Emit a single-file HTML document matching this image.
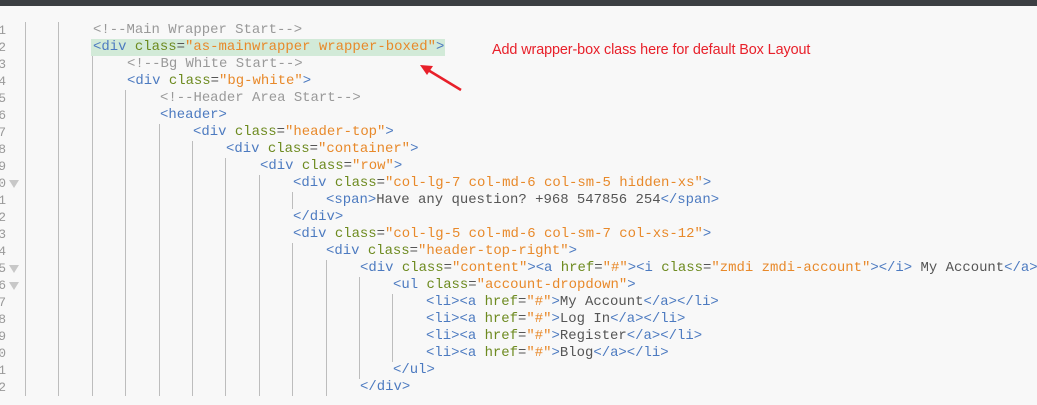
<!DOCTYPE html>
<html><head><meta charset="utf-8"><style>
body{margin:0;width:1037px;height:405px;overflow:hidden;background:#f8f8f8;position:relative;font-family:"Liberation Mono",monospace;}
.top{position:absolute;left:0;top:0;width:1037px;height:6px;background:#3c3f43;}
.l{position:absolute;left:0;height:17px;line-height:17px;font-size:13.95px;white-space:pre;color:#555;}
.n{position:absolute;left:-4px;width:10px;text-align:right;color:#999;font-size:13px;}
.g{position:absolute;top:0;width:1px;height:17px;background:#bdbdbd;}
.c{color:#999}.t{color:#4c7ac0}.a{color:#6d8a1f}.s{color:#e8892a}.x{color:#555}
.f{position:absolute;left:9px;top:5px;width:0;height:0;border-left:5px solid transparent;border-right:5px solid transparent;border-top:8px solid #c8c8c8;}
</style></head><body>
<div class="top"></div>
<div style="position:absolute;left:91px;top:39px;width:354px;height:17px;background:#d2ead8"></div>
<div id="c"></div>
<div style="position:absolute;left:492px;top:42px;font-family:'Liberation Sans',sans-serif;font-size:14.4px;letter-spacing:-0.1px;color:#e8202a;white-space:nowrap">Add wrapper-box class here for default Box Layout</div>
<svg style="position:absolute;left:0;top:0" width="1037" height="405"><line x1="461" y1="90" x2="428" y2="70" stroke="#e8202a" stroke-width="2.5"/><polygon points="420,65 433,66 427,75" fill="#e8202a"/></svg>
<script>
var L=[
[2,'<span class=c>&lt;!--Main Wrapper Start--&gt;</span>'],
[2,'<span class=t>&lt;div</span> <span class=a>class</span>=<span class=s>"as-mainwrapper wrapper-boxed"</span><span class=t>&gt;</span>'],
[3,'<span class=c>&lt;!--Bg White Start--&gt;</span>'],
[3,'<span class=t>&lt;div</span> <span class=a>class</span>=<span class=s>"bg-white"</span><span class=t>&gt;</span>'],
[4,'<span class=c>&lt;!--Header Area Start--&gt;</span>'],
[4,'<span class=t>&lt;header&gt;</span>'],
[5,'<span class=t>&lt;div</span> <span class=a>class</span>=<span class=s>"header-top"</span><span class=t>&gt;</span>'],
[6,'<span class=t>&lt;div</span> <span class=a>class</span>=<span class=s>"container"</span><span class=t>&gt;</span>'],
[7,'<span class=t>&lt;div</span> <span class=a>class</span>=<span class=s>"row"</span><span class=t>&gt;</span>'],
[8,'<span class=t>&lt;div</span> <span class=a>class</span>=<span class=s>"col-lg-7 col-md-6 col-sm-5 hidden-xs"</span><span class=t>&gt;</span>',1],
[9,'<span class=t>&lt;span&gt;</span>Have any question? +968 547856 254<span class=t>&lt;/span&gt;</span>'],
[8,'<span class=t>&lt;/div&gt;</span>'],
[8,'<span class=t>&lt;div</span> <span class=a>class</span>=<span class=s>"col-lg-5 col-md-6 col-sm-7 col-xs-12"</span><span class=t>&gt;</span>'],
[9,'<span class=t>&lt;div</span> <span class=a>class</span>=<span class=s>"header-top-right"</span><span class=t>&gt;</span>'],
[10,'<span class=t>&lt;div</span> <span class=a>class</span>=<span class=s>"content"</span><span class=t>&gt;&lt;a</span> <span class=a>href</span>=<span class=s>"#"</span><span class=t>&gt;&lt;i</span> <span class=a>class</span>=<span class=s>"zmdi zmdi-account"</span><span class=t>&gt;&lt;/i&gt;</span> My Account<span class=t>&lt;/a&gt;</span>',1],
[11,'<span class=t>&lt;ul</span> <span class=a>class</span>=<span class=s>"account-dropdown"</span><span class=t>&gt;</span>',1],
[12,'<span class=t>&lt;li&gt;&lt;a</span> <span class=a>href</span>=<span class=s>"#"</span><span class=t>&gt;</span>My Account<span class=t>&lt;/a&gt;&lt;/li&gt;</span>'],
[12,'<span class=t>&lt;li&gt;&lt;a</span> <span class=a>href</span>=<span class=s>"#"</span><span class=t>&gt;</span>Log In<span class=t>&lt;/a&gt;&lt;/li&gt;</span>'],
[12,'<span class=t>&lt;li&gt;&lt;a</span> <span class=a>href</span>=<span class=s>"#"</span><span class=t>&gt;</span>Register<span class=t>&lt;/a&gt;&lt;/li&gt;</span>'],
[12,'<span class=t>&lt;li&gt;&lt;a</span> <span class=a>href</span>=<span class=s>"#"</span><span class=t>&gt;</span>Blog<span class=t>&lt;/a&gt;&lt;/li&gt;</span>'],
[11,'<span class=t>&lt;/ul&gt;</span>'],
[10,'<span class=t>&lt;/div&gt;</span>']];
var h='';
for(var i=0;i<L.length;i++){var y=22+17*i,lv=L[i][0];
h+='<div class="l" style="top:'+y+'px;width:1037px">';
h+='<span class="n">'+((i+1)%10)+'</span>';
if(L[i][2])h+='<span class="f"></span>';
for(var k=0;k<lv;k++){var gx=k==0?25:(k==1?58:Math.round(25+33.4*k));h+='<span class="g" style="left:'+gx+'px"></span>';}
h+='<span style="position:absolute;left:'+Math.round(26.6+33.3*lv)+'px">'+L[i][1]+'</span></div>';}
document.getElementById('c').innerHTML=h;
</script>
</body></html>
